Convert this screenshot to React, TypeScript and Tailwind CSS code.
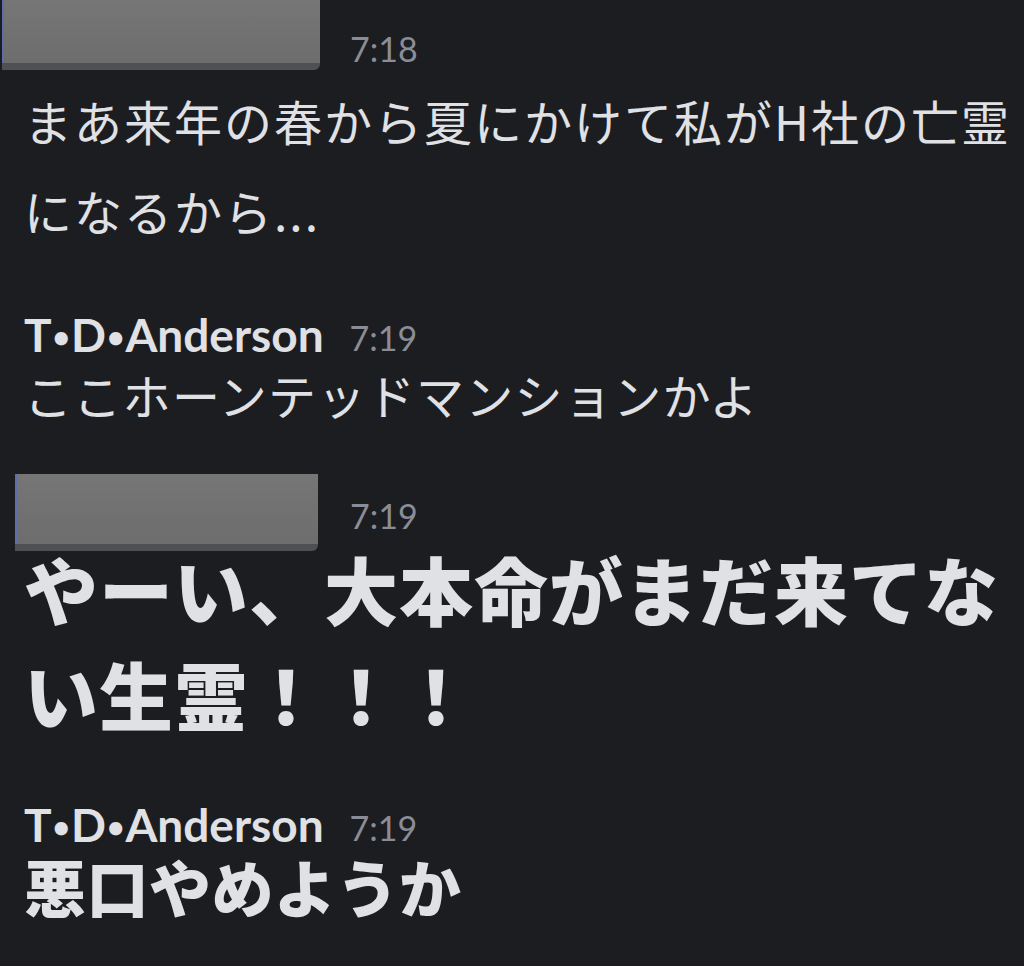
import React from 'react';

const jp = { fontFamily: '"Noto Sans CJK JP", "Noto Sans", sans-serif' };
const latin = { fontFamily: 'Lato, "Noto Sans CJK JP", sans-serif' };

// grey redaction block covering an avatar/name
const Redacted: React.FC<{ className?: string }> = ({ className = '' }) => (
  <div
    className={`relative rounded-br-[6px] bg-gradient-to-b from-[#767676] to-[#6d6d6d] border-b-[7px] border-b-[#505053] shadow-[inset_2px_0_0_#5c6fa8] ${className}`}
  />
);

const Time: React.FC<{ children: React.ReactNode; className?: string }> = ({ children, className = '' }) => (
  <span className={`text-[34px] leading-none text-[#8b8d96] ${className}`} style={latin}>
    {children}
  </span>
);

const Dot: React.FC = () => <span className="mx-[1px] text-[30px] align-[4px]">•</span>;

const Name: React.FC = () => (
  <div className="flex h-[54px] items-center">
    <span className="text-[46px] font-bold leading-none text-[#e0e1e5]" style={latin}>
      T<Dot />D<Dot />Anderson
    </span>
    <Time className="ml-[26px] mt-[6px]">7:19</Time>
  </div>
);

export default function App() {
  return (
    <div className="min-h-screen w-full overflow-hidden bg-[#1c1d21] pl-[24px] text-[#e0e1e5]">
      {/* first message */}
      <div className="flex items-end">
        <Redacted className="-ml-[22px] h-[70px] w-[318px]" />
        <Time className="mb-[4px] ml-[30px]">7:18</Time>
      </div>
      <p className="mt-[5px] w-[1000px] text-[48px] leading-[90px] tracking-[2px]" style={jp}>
        まあ来年の春から夏にかけて私がH社の亡霊
        <br />
        になるから...
      </p>

      {/* T.D.Anderson */}
      <div className="mt-[53px]">
        <Name />
        <p className="mt-[2px] text-[48px] leading-[60px] tracking-[1.3px]" style={jp}>
          ここホーンテッドマンションかよ
        </p>
      </div>

      {/* shouting */}
      <div className="mt-[50px] flex items-center">
        <Redacted className="-ml-[9px] h-[77px] w-[303px]" />
        <Time className="ml-[32px] mt-[6px]">7:19</Time>
      </div>
      <p className="-mt-[16px] text-[74px] font-black leading-[105px] tracking-[1px]" style={jp}>
        やーい、大本命がまだ来てな
        <br />
        い生霊！！！
      </p>

      {/* reply */}
      <div className="mt-[53px]">
        <Name />
        <p className="mt-[2px] text-[62px] font-black leading-[64px] tracking-[0.5px]" style={jp}>
          悪口やめようか
        </p>
      </div>
    </div>
  );
}
